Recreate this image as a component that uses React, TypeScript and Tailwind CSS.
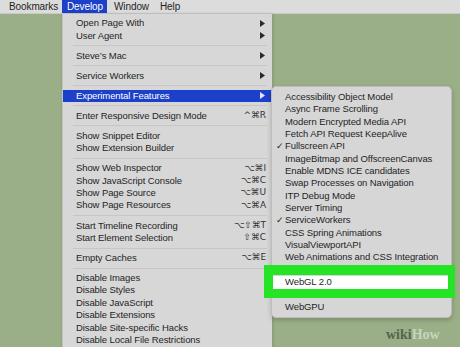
import React from 'react'

type Item =
  | { sep: true }
  | { label: string; key?: string; arrow?: boolean; active?: boolean }

const DEVELOP: Item[] = [
  { label: 'Open Page With', arrow: true },
  { label: 'User Agent', arrow: true },
  { sep: true },
  { label: 'Steve’s Mac', arrow: true },
  { sep: true },
  { label: 'Service Workers', arrow: true },
  { sep: true },
  { label: 'Experimental Features', arrow: true, active: true },
  { sep: true },
  { label: 'Enter Responsive Design Mode', key: '^⌘R' },
  { sep: true },
  { label: 'Show Snippet Editor' },
  { label: 'Show Extension Builder' },
  { sep: true },
  { label: 'Show Web Inspector', key: '⌥⌘I' },
  { label: 'Show JavaScript Console', key: '⌥⌘C' },
  { label: 'Show Page Source', key: '⌥⌘U' },
  { label: 'Show Page Resources', key: '⌥⌘A' },
  { sep: true },
  { label: 'Start Timeline Recording', key: '⌥⇧⌘T' },
  { label: 'Start Element Selection', key: '⇧⌘C' },
  { sep: true },
  { label: 'Empty Caches', key: '⌥⌘E' },
  { sep: true },
  { label: 'Disable Images' },
  { label: 'Disable Styles' },
  { label: 'Disable JavaScript' },
  { label: 'Disable Extensions' },
  { label: 'Disable Site-specific Hacks' },
  { label: 'Disable Local File Restrictions' },
]

const FEATURES: { label: string; checked?: boolean; marked?: boolean }[] = [
  { label: 'Accessibility Object Model' },
  { label: 'Async Frame Scrolling' },
  { label: 'Modern Encrypted Media API' },
  { label: 'Fetch API Request KeepAlive' },
  { label: 'Fullscreen API', checked: true },
  { label: 'ImageBitmap and OffscreenCanvas' },
  { label: 'Enable MDNS ICE candidates' },
  { label: 'Swap Processes on Navigation' },
  { label: 'ITP Debug Mode' },
  { label: 'Server Timing' },
  { label: 'ServiceWorkers', checked: true },
  { label: 'CSS Spring Animations' },
  { label: 'VisualViewportAPI' },
  { label: 'Web Animations and CSS Integration' },
  { label: 'Web Authentication' },
  { label: 'WebGL 2.0', marked: true },
  { label: 'WebMetal' },
  { label: 'WebGPU' },
]

function Arrow({ white }: { white?: boolean }) {
  return (
    <svg width="5" height="7" viewBox="0 0 5 7">
      <path d="M0 0 L5 3.5 L0 7 Z" fill={white ? '#dfe6ff' : '#2a2a2a'} />
    </svg>
  )
}

export default function App() {
  return (
    <div
      className="relative w-[460px] h-[347px] overflow-hidden bg-[#9aae87] text-[#1f1f1f]"
      style={{ fontFamily: '"Liberation Sans", "DejaVu Sans", Arial, sans-serif' }}
    >
      {/* menu bar */}
      <div className="flex h-[14px] items-center bg-[#dcdcdc] border-b border-[#c9c9c9] text-[10px] tracking-[-0.1px]">
        <div className="w-[62px] pl-[9px]">Bookmarks</div>
        <div className="w-[45px] h-full flex items-center pl-[5px] bg-[#1c40c9] text-white">Develop</div>
        <div className="w-[53px] pl-[7px]">Window</div>
        <div>Help</div>
      </div>

      <div className="flex items-start">
        <div className="w-[62px] shrink-0" />

        {/* Develop menu */}
        <div className="w-[210px] shrink-0 h-[340px] pt-[3px] bg-[#d7d7d7] border-l border-[#c2c2c2] text-[9.5px] tracking-[-0.1px] shadow-[1px_0_3px_rgba(0,0,0,0.15)]">
          {DEVELOP.map((it, i) =>
            'sep' in it ? (
              <div key={i} className="h-[7.6px] flex items-center pl-[10px] pr-[5px]">
                <div className="h-px w-full bg-[#c6c6c6]" />
              </div>
            ) : (
              <div
                key={i}
                className={`h-[12.45px] flex items-center justify-between pl-[13px] pr-[6px] ${
                  it.active ? 'bg-[#1c40c9] text-white' : ''
                }`}
              >
                <span>{it.label}</span>
                {it.key && (
                  <span
                    className="text-[9px] text-[#333]"
                    style={{ fontFamily: '"DejaVu Sans", sans-serif' }}
                  >
                    {it.key}
                  </span>
                )}
                {it.arrow && (
                  <span className="pr-[1px]">
                    <Arrow white={it.active} />
                  </span>
                )}
              </div>
            )
          )}
        </div>

        {/* Experimental Features submenu */}
        <div className="w-[181px] shrink-0 -ml-[1px] mt-[72px] pt-[3.8px] pb-[4px] bg-[#d6d6d6] border border-[#bdbdbd] rounded-[5px] text-[9.5px] tracking-[-0.1px] shadow-[0_2px_5px_rgba(0,0,0,0.2)]">
          {FEATURES.map((f) => (
            <div
              key={f.label}
              className={`h-[12.35px] flex items-center ${f.marked ? 'bg-white shadow-[0_2px_0_white]' : ''}`}
            >
              <span className="w-[13px] pl-[4px] text-[9px]">{f.checked ? '✓' : ''}</span>
              <span>{f.label}</span>
            </div>
          ))}
        </div>
      </div>

      {/* green highlight frame */}
      <div className="absolute left-[264px] top-[265px] w-[191px] h-[33px] border-l-[9px] border-r-[7px] border-t-[10px] border-b-[9px] border-[#25e425]" />

      {/* watermark */}
      <div
        className="absolute left-[386px] top-[328px] text-[14px] font-bold leading-none"
        style={{ fontFamily: '"Liberation Serif", serif' }}
      >
        <span className="text-[#56654a]">wiki</span>
        <span className="text-[#c9d4bd]">How</span>
      </div>
    </div>
  )
}
